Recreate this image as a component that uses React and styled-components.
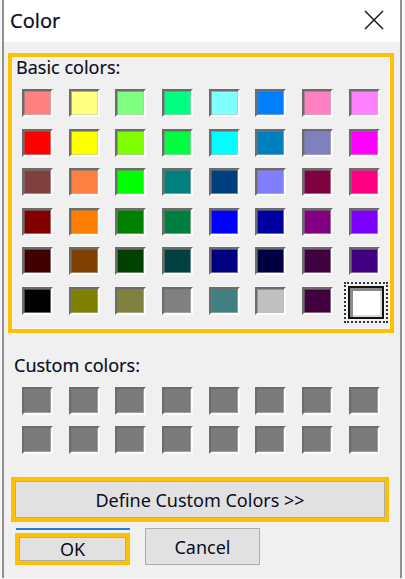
import React from 'react';
import styled, { createGlobalStyle } from 'styled-components';

const GlobalStyle = createGlobalStyle`
  html, body {
    margin: 0;
    padding: 0;
    background: #f7f7f7;
  }
  body {
    font-family: "Noto Sans", "Open Sans", sans-serif;
  }
`;

const HIGHLIGHT = '#ffc000';

// standard basic colours of the colour picker, row by row
const BASIC_COLORS = [
  ['#ff8080', '#ffff80', '#80ff80', '#00ff80', '#80ffff', '#0080ff', '#ff80c0', '#ff80ff'],
  ['#ff0000', '#ffff00', '#80ff00', '#00ff40', '#00ffff', '#0080c0', '#8080c0', '#ff00ff'],
  ['#804040', '#ff8040', '#00ff00', '#008080', '#004080', '#8080ff', '#800040', '#ff0080'],
  ['#800000', '#ff8000', '#008000', '#008040', '#0000ff', '#0000a0', '#800080', '#8000ff'],
  ['#400000', '#804000', '#004000', '#004040', '#000080', '#000040', '#400040', '#400080'],
  ['#000000', '#808000', '#808040', '#808080', '#408080', '#c0c0c0', '#400040', '#ffffff'],
];

const Window = styled.div`
  margin-left: 2px;
  width: 396px;
  border-left: 2px solid #8f8f8f;
  border-right: 2px solid #8f8f8f;
  background: #f0f0f0;
  display: flex;
  flex-direction: column;
`;

const TitleBar = styled.div`
  height: 42px;
  background: #ffffff;
  display: flex;
  align-items: center;
  justify-content: space-between;
  padding: 0 16px 2px 6px;
  box-sizing: border-box;
`;

const Title = styled.span`
  font-size: 20px;
  color: #0c0c22;
  -webkit-text-stroke: 0.2px #0c0c22;
`;

const CloseIcon = styled.svg`
  width: 20px;
  height: 20px;
  display: block;
`;

const Body = styled.div`
  display: flex;
  flex-direction: column;
  padding: 11px 0 13px 0;
`;

const Highlight = styled.div`
  border: 4px solid ${HIGHLIGHT};
  box-sizing: border-box;
`;

const BasicBox = styled(Highlight)`
  margin-left: 4px;
  width: 386px;
  padding: 0 0 14px 0;
  box-shadow: inset 0 0 0 1px #fafafa;
`;

const Label = styled.div`
  font-size: 18px;
  line-height: 20px;
  color: #0c0c22;
  -webkit-text-stroke: 0.15px #0c0c22;
  padding-left: ${p => p.$indent}px;
  margin-top: ${p => p.$top || 0}px;
`;

const Grid = styled.div`
  display: grid;
  grid-template-columns: repeat(8, 31px);
  grid-auto-rows: 28px;
  column-gap: 15.67px;
  row-gap: 11.5px;
  margin: 12px 0 0 ${p => p.$left}px;
`;

const Swatch = styled.div`
  box-sizing: border-box;
  border-style: solid;
  border-width: 2px;
  border-color: #6c6c6c #fdfdfd #fdfdfd #6c6c6c;
  background: ${p => p.$color};
  box-shadow: inset 1px 1px 0 rgba(120, 120, 120, 0.6), inset -1px -1px 0 rgba(190, 190, 190, 0.55);
`;

const SelectedSwatch = styled.div`
  box-sizing: border-box;
  margin: -1px -4px -4px -1px;
  border: 2px solid #111;
  outline: 2px dotted #333;
  outline-offset: 2px;
  background: ${p => p.$color};
  box-shadow: inset 3px 3px 0 #8a8a8a, inset -2px -2px 0 #d8d8d8;
`;

const DefineWrap = styled(Highlight)`
  margin: 23px 0 0 7px;
  width: 378px;
  height: 45px;
`;

const Button = styled.button`
  box-sizing: border-box;
  width: ${p => p.$width || '100%'};
  height: ${p => p.$height || '100%'};
  margin: 0;
  padding: 0;
  background: #e1e1e1;
  border: 1px solid #adadad;
  font-family: "Noto Sans", "Open Sans", sans-serif;
  font-size: 18px;
  color: #0c0c22;
  display: flex;
  align-items: center;
  justify-content: center;
`;

const ButtonRow = styled.div`
  display: flex;
  align-items: flex-start;
  gap: 15px;
  margin: 6px 0 0 11px;
`;

const DefaultSlot = styled.div`
  display: flex;
  flex-direction: column;
  gap: 3px;
  width: 115px;
`;

const FocusLine = styled.div`
  height: 2px;
  margin-left: 1px;
  background: #1f7fd6;
`;

const OkWrap = styled(Highlight)`
  height: 32px;
`;

function CloseGlyph() {
  return (
    <CloseIcon viewBox="0 0 20 20">
      <path d="M1 1 L19 19 M19 1 L1 19" stroke="#1a1a1a" strokeWidth="1.5" fill="none" />
    </CloseIcon>
  );
}

export default function App() {
  const last = BASIC_COLORS.length - 1;
  return (
    <>
      <GlobalStyle />
      <Window>
        <TitleBar>
          <Title>Color</Title>
          <CloseGlyph />
        </TitleBar>
        <Body>
          <BasicBox>
            <Label $indent={4}>Basic colors:</Label>
            <Grid $left={10}>
              {BASIC_COLORS.map((row, r) =>
                row.map((c, i) =>
                  r === last && i === row.length - 1 ? (
                    <SelectedSwatch key={`${r}-${i}`} $color={c} />
                  ) : (
                    <Swatch key={`${r}-${i}`} $color={c} />
                  )
                )
              )}
            </Grid>
          </BasicBox>

          <Label $indent={10} $top={22}>Custom colors:</Label>
          <Grid $left={18}>
            {Array.from({ length: 16 }).map((_, i) => (
              <Swatch key={i} $color="#7b7b7b" />
            ))}
          </Grid>

          <DefineWrap>
            <Button>Define Custom Colors &gt;&gt;</Button>
          </DefineWrap>

          <ButtonRow>
            <DefaultSlot>
              <FocusLine />
              <OkWrap>
                <Button>OK</Button>
              </OkWrap>
            </DefaultSlot>
            <Button $width="115px" $height="37px">Cancel</Button>
          </ButtonRow>
        </Body>
      </Window>
    </>
  );
}
